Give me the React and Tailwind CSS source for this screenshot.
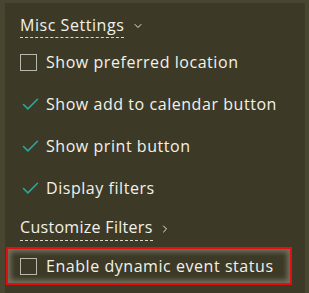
import { Check, ChevronDown, ChevronRight } from 'lucide-react'

const font = { fontFamily: '"Open Sans", "Liberation Sans", sans-serif' }

function Box() {
  return <span className="block w-[17px] h-[17px] border border-[#b9b8ae] shrink-0" />
}

function Row({ checked, label }) {
  return (
    <div className="flex items-center h-[42px] gap-[9px]">
      {checked ? (
        <Check className="w-[21px] h-[21px] text-[#2aa99a] shrink-0" strokeWidth={1.8} />
      ) : (
        <Box />
      )}
      <span className={checked ? 'ml-[-4px]' : ''}>{label}</span>
    </div>
  )
}

export default function App() {
  return (
    <div className="w-[309px] h-[293px] bg-[#484630] pt-[3px] pl-[5px] pr-[4px] overflow-hidden" style={font}>
      <div className="h-full bg-[#3c3a27] text-[#f2f1ea] text-[16px] tracking-[0.55px] font-medium pl-[15px] pt-[11px]">
        <div className="flex items-center gap-[8px] h-[24px]">
          <span className="border-b border-dashed border-[#d9d8cf] leading-[20px] pb-[2px]">Misc Settings</span>
          <ChevronDown className="w-[12px] h-[12px] text-[#e8e7df]" strokeWidth={2} />
        </div>
        <div className="mt-[3px]">
          <Row label="Show preferred location" />
          <Row checked label="Show add to calendar button" />
          <Row checked label="Show print button" />
          <Row checked label="Display filters" />
        </div>
        <div className="flex items-center gap-[6px] h-[24px] mt-[8px]">
          <span className="border-b border-dashed border-[#d9d8cf] leading-[20px] pb-[3px] tracking-[0.3px]">Customize Filters</span>
          <ChevronRight className="w-[12px] h-[12px] text-[#e8e7df]" strokeWidth={2} />
        </div>
        <div className="mt-[6px] -ml-[14px] w-[286px] h-[38px] border-2 border-[#e01010] shadow-[inset_0_0_5px_3px_rgba(125,123,105,0.85)] flex items-center pl-[12px] gap-[9px]">
          <Box />
          <span>Enable dynamic event status</span>
        </div>
      </div>
    </div>
  )
}
